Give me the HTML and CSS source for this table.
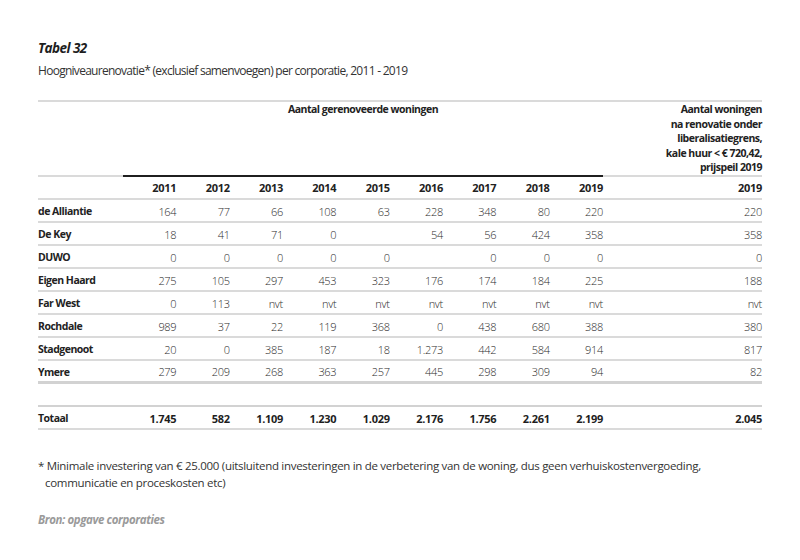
FILE: index.html
```html
<!DOCTYPE html>
<html lang="nl">
<head>
<meta charset="utf-8">
<title>Tabel 32</title>
<link rel="stylesheet" href="styles.css">
</head>
<body>
<div class="page">
  <h1 class="title">Tabel 32</h1>
  <p class="subtitle">Hoogniveaurenovatie* (exclusief samenvoegen) per corporatie, 2011 - 2019</p>
  <table class="data">
    <colgroup>
      <col class="c-label">
      <col class="c-year"><col class="c-year"><col class="c-year"><col class="c-year"><col class="c-year">
      <col class="c-year"><col class="c-year"><col class="c-year"><col class="c-year">
      <col class="c-last">
    </colgroup>
    <thead>
      <tr class="head-top">
        <th class="blank"></th>
        <th colspan="9" class="group">Aantal gerenoveerde woningen</th>
        <th class="lastgroup">Aantal woningen<br>na renovatie onder<br>liberalisatiegrens,<br>kale huur &lt; € 720,42,<br>prijspeil 2019</th>
      </tr>
      <tr class="years">
        <th></th>
        <th>2011</th><th>2012</th><th>2013</th><th>2014</th><th>2015</th>
        <th>2016</th><th>2017</th><th>2018</th><th>2019</th>
        <th>2019</th>
      </tr>
    </thead>
    <tbody>
      <tr><th>de Alliantie</th><td>164</td><td>77</td><td>66</td><td>108</td><td>63</td><td>228</td><td>348</td><td>80</td><td>220</td><td>220</td></tr>
      <tr><th>De Key</th><td>18</td><td>41</td><td>71</td><td>0</td><td></td><td>54</td><td>56</td><td>424</td><td>358</td><td>358</td></tr>
      <tr><th>DUWO</th><td>0</td><td>0</td><td>0</td><td>0</td><td>0</td><td></td><td>0</td><td>0</td><td>0</td><td>0</td></tr>
      <tr><th>Eigen Haard</th><td>275</td><td>105</td><td>297</td><td>453</td><td>323</td><td>176</td><td>174</td><td>184</td><td>225</td><td>188</td></tr>
      <tr><th>Far West</th><td>0</td><td>113</td><td>nvt</td><td>nvt</td><td>nvt</td><td>nvt</td><td>nvt</td><td>nvt</td><td>nvt</td><td>nvt</td></tr>
      <tr><th>Rochdale</th><td>989</td><td>37</td><td>22</td><td>119</td><td>368</td><td>0</td><td>438</td><td>680</td><td>388</td><td>380</td></tr>
      <tr><th>Stadgenoot</th><td>20</td><td>0</td><td>385</td><td>187</td><td>18</td><td>1.273</td><td>442</td><td>584</td><td>914</td><td>817</td></tr>
      <tr class="last-row"><th>Ymere</th><td>279</td><td>209</td><td>268</td><td>363</td><td>257</td><td>445</td><td>298</td><td>309</td><td>94</td><td>82</td></tr>
      <tr class="spacer"><td colspan="11"></td></tr>
      <tr class="total"><th>Totaal</th><td>1.745</td><td>582</td><td>1.109</td><td>1.230</td><td>1.029</td><td>2.176</td><td>1.756</td><td>2.261</td><td>2.199</td><td>2.045</td></tr>
    </tbody>
  </table>
  <p class="note">* Minimale investering van € 25.000 (uitsluitend investeringen in de verbetering van de woning, dus geen verhuiskostenvergoeding, communicatie en proceskosten etc)</p>
  <p class="source">Bron: opgave corporaties</p>
</div>
</body>
</html>
```

FILE: styles.css
```css
html, body {
  margin: 0;
  padding: 0;
  background: #ffffff;
}

body {
  font-family: "Open Sans", "Noto Sans", sans-serif;
  color: #2a2a2a;
}

.page {
  width: 724px;
  padding: 40px 38px 0 38px;
}

.title {
  margin: 0;
  font-size: 13.5px;
  line-height: 16px;
  font-weight: 700;
  font-style: italic;
  color: #1e1e1e;
  letter-spacing: -0.55px;
}

.subtitle {
  margin: 7px 0 0 0;
  font-size: 12px;
  line-height: 16px;
  color: #333333;
  letter-spacing: -0.72px;
}

.data {
  margin-top: 21px;
  width: 724px;
  border-collapse: collapse;
  table-layout: fixed;
  font-size: 11px;
}

.c-label { width: 85px; }
.c-year { width: 53.33px; }
.c-last { width: 159px; }

.data th,
.data td {
  padding: 0;
  text-align: right;
  border-bottom: 2px solid #dadada;
  white-space: nowrap;
}

.data thead tr.head-top th {
  border-top: 2px solid #dadada;
  vertical-align: top;
  font-weight: 700;
  font-size: 10.5px;
  color: #222222;
  letter-spacing: -0.5px;
}

.data thead .group {
  text-align: center;
  border-bottom: 2px solid #1f1f1f;
  line-height: 14.5px;
}

.data thead .lastgroup {
  line-height: 14.5px;
  height: 72px;
}

.data .years th {
  height: 21px;
  font-weight: 700;
  color: #222222;
  letter-spacing: -0.3px;
}

.data tbody tr {
  height: 23px;
}

.data tbody th,
.data tbody td {
  padding-top: 2px;
}

.data tbody th {
  text-align: left;
  font-weight: 700;
  font-size: 10.5px;
  color: #222222;
  letter-spacing: -0.5px;
}

.data tbody td {
  font-weight: 300;
  color: #2c2c2c;
  letter-spacing: -0.3px;
}

.data tr.last-row th,
.data tr.last-row td {
  border-bottom: 3px solid #d2d2d2;
}

.data tr.spacer td {
  height: 18px;
  border-bottom: 2px solid #d2d2d2;
}

.data tr.total th,
.data tr.total td {
  font-weight: 700;
  color: #1e1e1e;
}

.data tr.total th {
  font-size: 10.5px;
}

.note {
  margin: 27px 0 0 0;
  padding-left: 7px;
  text-indent: -7px;
  font-size: 11.5px;
  line-height: 17px;
  color: #333333;
  letter-spacing: -0.3px;
  width: 690px;
}

.source {
  margin: 21px 0 0 0;
  font-size: 11.5px;
  line-height: 16px;
  font-weight: 700;
  font-style: italic;
  color: #9a9a9a;
  letter-spacing: -0.4px;
}
```
